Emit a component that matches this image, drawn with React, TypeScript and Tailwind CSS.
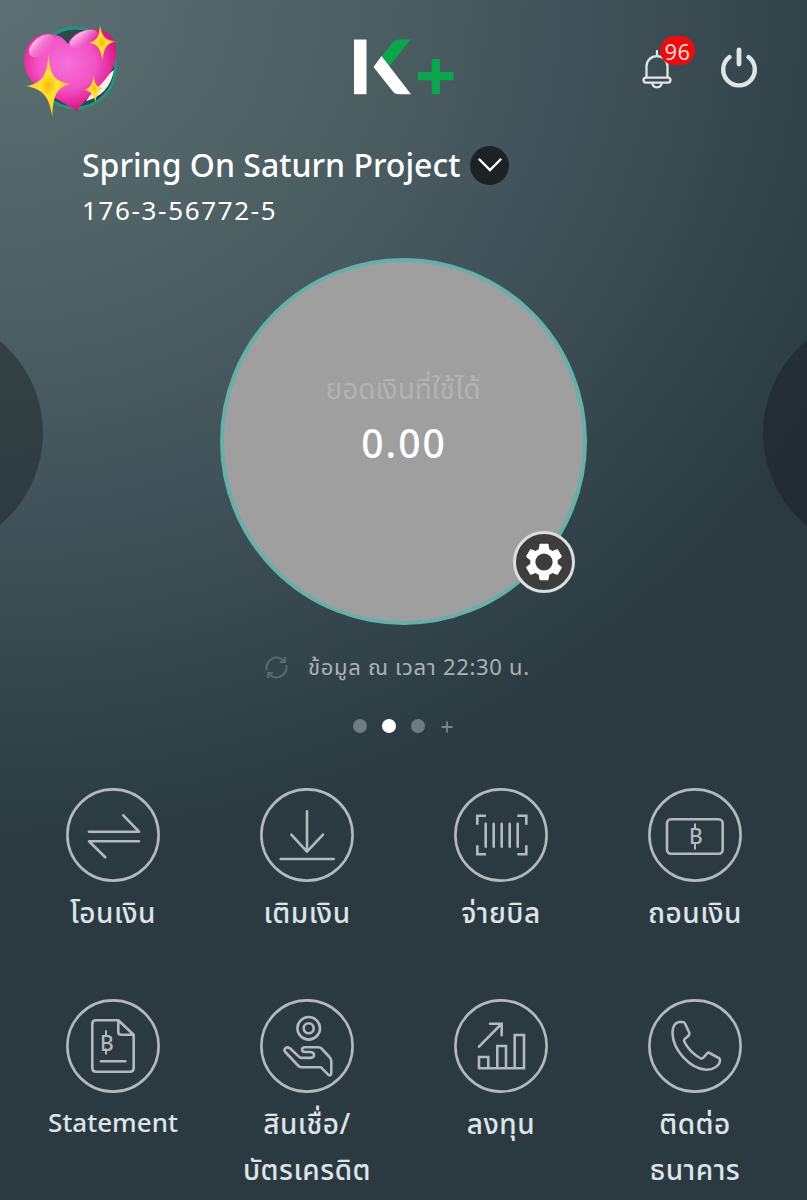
import { type ReactNode } from 'react';

type MenuItem = {
  label: string[];
  icon: ReactNode;
};

const HeartAvatar = () => (
  <svg width={100} height={96} viewBox="20 22 100 96">
    <defs>
      <radialGradient id="heart" cx="0.46" cy="0.42" r="0.62">
        <stop offset="0" stopColor="#f76fdd" />
        <stop offset="0.5" stopColor="#f254c4" />
        <stop offset="0.8" stopColor="#e32596" />
        <stop offset="1" stopColor="#cf0f68" />
      </radialGradient>
      <linearGradient id="shine" x1="0" y1="0" x2="0.3" y2="1">
        <stop offset="0" stopColor="#ffeafa" stopOpacity="0.95" />
        <stop offset="1" stopColor="#fb8be0" stopOpacity="0" />
      </linearGradient>
      <radialGradient id="spark">
        <stop offset="0" stopColor="#ffb800" />
        <stop offset="0.4" stopColor="#ffe23c" />
        <stop offset="1" stopColor="#ffc21a" />
      </radialGradient>
    </defs>
    <circle cx="75.500" cy="68" r="40" fill="#30484b" stroke="#22957f" strokeWidth="3" />
    <path d="M114 70C111 87 101 97 86 101L92 92L110 73Z" fill="#f3efed" />
    <path
      d="M68 44C61 33 46 31 36 37C25 44 22 57 25.500 70C31 88 57 98 77 111C84 99 104 84 112 70C118 57 118 41 109 34C96 25 74 29 68 44Z"
      fill="url(#heart)"
    />
    <ellipse cx="42" cy="46" rx="15" ry="9" fill="url(#shine)" transform="rotate(-38 42 46)" />
    <ellipse cx="84" cy="39" rx="15" ry="7.500" fill="url(#shine)" transform="rotate(-25 84 39)" />
    <g fill="url(#spark)">
      <path d="M48.500 54C50 74 53 81 70 84C55 88 53 98 52.500 117C49 99 46 90 26 86C43 83 47 75 48.500 54Z" />
      <path d="M100 25C102 36 104 40 115 41.500C106 44 104 48 102.500 60C100 48 98 44 89 43C98 40 99 36 100 25Z" />
      <path d="M93.500 75C94.500 84 96 87 103 88C98 91 96.500 95 95.500 102C93.500 95 92 92 85 90C91 87 93 83 93.500 75Z" />
    </g>
  </svg>
);

const Logo = () => (
  <svg width={102} height={56} viewBox="353 39.500 102 56">
    <path d="M354 40H366.500V94.700H354Z" fill="#fff" />
    <path d="M382 57L392 43.500Q395 40 400 40H410.500L389 67Z" fill="#0ba64c" />
    <path d="M381.500 56.500L411 94.700H399Q395 94.700 392.500 91.500L373.500 67.500Z" fill="#fff" />
    <path d="M418 76.600H453.500M435.800 59.500V94.500" stroke="#0ba64c" strokeWidth="8.200" />
  </svg>
);

const BellIcon = () => (
  <svg width={30} height={40} viewBox="642 50 30 40" fill="none" stroke="#dfe6ea" strokeWidth="2.300">
    <path d="M657 51V56M646.500 77V66.500C646.500 60.500 651 56.200 657 56.200S667.500 60.500 667.500 66.500V77" strokeLinecap="round" />
    <rect x="643.500" y="77.600" width="27" height="5" rx="2.500" />
    <path d="M652.500 83C652.500 86 654 87.300 657 87.300S661.500 86 661.500 83" />
  </svg>
);

const PowerIcon = () => (
  <svg width={38} height={42} viewBox="720 46 38 42" fill="none" stroke="#dfe6ea" strokeLinecap="round">
    <path d="M729.500 57A15.800 15.800 0 1 0 748.500 57" strokeWidth="4.400" />
    <path d="M739 50V64" strokeWidth="4.800" />
  </svg>
);

const Baht = ({ x, y, top, bottom }: { x: number; y: number; top: number; bottom: number }) => (
  <>
    <text
      x={x}
      y={y}
      fill="#b2babd"
      stroke="none"
      className="font-['Noto_Sans',sans-serif] text-[21px] font-medium"
    >
      B
    </text>
    <path d={`M${x + 6} ${top}V${top + 4.500}M${x + 6} ${bottom - 4.500}V${bottom}`} strokeWidth="2" />
  </>
);

const items: MenuItem[] = [
  {
    label: ['โอนเงิน'],
    icon: <path d="M57.300 27.300L73 43.700H23M39.300 69.300L23 53.300H73" />,
  },
  {
    label: ['เติมเงิน'],
    icon: <path d="M47 23.300V63.500M31.300 46.700L47 63.700L63 46.700M20.700 71H73.700" />,
  },
  {
    label: ['จ่ายบิล'],
    icon: (
      <>
        <path d="M32 27.700H23.300V36.700M63.300 27.700H72.300V36.700M32 66.300H23.300V57.300M63.300 66.300H72.300V57.300" strokeLinecap="butt" strokeLinejoin="miter" />
        <path d="M31.700 35.700V58.700M39.700 35.700V58.700M47.700 35.700V58.700M55.700 35.700V58.700M63.700 35.700V58.700" />
      </>
    ),
  },
  {
    label: ['ถอนเงิน'],
    icon: (
      <>
        <rect x="19" y="31.300" width="55.700" height="34.400" rx="4" />
        <Baht x={41} y={56} top={36.300} bottom={60.700} />
      </>
    ),
  },
  {
    label: ['Statement'],
    icon: (
      <>
        <path d="M52.300 21.300H30Q26.300 21.300 26.300 25V69Q26.300 72.700 30 72.700H64Q67.700 72.700 67.700 69V35.700ZV33Q52.300 35.700 55 35.700H67.700" />
        <path d="M35 62.300H59.300" />
        <Baht x={34} y={51.500} top={32} bottom={54.800} />
      </>
    ),
  },
  {
    label: ['สินเชื่อ/', 'บัตรเครดิต'],
    icon: (
      <>
        <circle cx="48.700" cy="29.300" r="11.300" />
        <circle cx="48.700" cy="29.300" r="5" />
        <path d="M25.300 53L38.500 67Q39.800 68.300 42 68.300H61L68.500 75.800Q71 77.500 71.300 74V62.500Q71.300 60 69.500 58L61.500 49.500Q60.500 48.300 58.500 48.300H45Q42 48.300 42 50.500T45 53H50.500Q54 53.300 54 56T50.500 58.900H41.500Q40 58.900 38.500 57.400L30 49.300C26.500 47 23 50 25.300 53Z" />
      </>
    ),
  },
  {
    label: ['ลงทุน'],
    icon: (
      <>
        <path d="M25 47.700L47.300 25M36 24.700H47.700V36.300" strokeLinejoin="miter" />
        <path d="M25 69.300V58H34.300V69.300M43.300 69.300V47H52V69.300M60.700 69.300V36H70V69.300H25Z" strokeLinejoin="miter" />
      </>
    ),
  },
  {
    label: ['ติดต่อ', 'ธนาคาร'],
    icon: (
      <path d="M34.800 23H31C26.500 23.800 24.500 28 24.500 34C24.800 51 42 69.500 58 70.700C65 71 71.500 67 72 61.500Q72 59.500 70.500 58.800L61.500 54Q60 53.200 59 54.500L55.500 58.500Q54 60.200 52 59C45 55 39.500 49 36.500 43Q35.500 41 37 39.800L40.800 36.500Q42 35.300 41.300 33.800L37 24.500Q36.200 23 34.800 23Z" />
    ),
  },
];

const MenuButton = ({ item }: { item: MenuItem }) => (
  <button className="flex h-[211px] flex-col items-center">
    <svg
      width={94}
      height={94}
      viewBox="0 0 94 94"
      fill="none"
      stroke="#b2babd"
      strokeWidth="2.600"
      strokeLinecap="round"
      strokeLinejoin="round"
    >
      <circle cx="47" cy="47" r="45.600" />
      {item.icon}
    </svg>
    <span className="mt-[7px] flex flex-col leading-[46px] font-medium whitespace-nowrap text-[#dce4e8]">
      {item.label.map((line) => (
        <span
          key={line}
          className={line === 'Statement' ? 'text-[26px] leading-[45px]' : 'text-[28px] tracking-[0.5px] leading-[46px]'}
        >
          {line}
        </span>
      ))}
    </span>
  </button>
);

export default function App() {
  return (
    <div className="flex h-[1200px] w-[807px] flex-col overflow-hidden bg-[#2b3a41] bg-[radial-gradient(ellipse_950px_850px_at_0%_0%,#5c7073_0%,#4d6063_35%,#41535a_60%,#38494f_75%,#32434a_85%,#2b3a41_100%)] font-['Noto_Sans','Noto_Sans_Thai',sans-serif] text-white">
      <header className="flex h-[130px] shrink-0 items-start justify-between pt-[22px] pr-[49px] pl-5">
        <div className="flex">
          <HeartAvatar />
          <div className="mt-[17px] ml-[233px]">
            <Logo />
          </div>
        </div>
        <div className="flex">
          <div className="relative mt-[28px] mr-[48px]">
            <BellIcon />
            <span className="absolute -top-[14px] left-[18px] flex h-[29px] w-[35px] items-center justify-center rounded-full bg-[#ec0b0d] text-[22px] leading-none tracking-[0.5px] text-[#ffd9d3]">
              96
            </span>
          </div>
          <div className="mt-6">
            <PowerIcon />
          </div>
        </div>
      </header>

      <section className="h-[128px] shrink-0 pl-[82px]">
        <div className="flex items-center pt-[15px]">
          <h1 className="w-[388px] text-[32px] leading-[40px] font-medium whitespace-nowrap">Spring On Saturn Project</h1>
          <button className="flex size-[39px] items-center justify-center rounded-full bg-[#1b2325]">
            <svg width={24} height={14} viewBox="0 0 24 14" fill="none" stroke="#fff" strokeWidth="2.400" strokeLinecap="round">
              <path d="M1.500 1.500L12 12L22.500 1.500" />
            </svg>
          </button>
        </div>
        <p className="mt-[8px] text-[26px] leading-[34px] tracking-[1.65px]">176-3-56772-5</p>
      </section>

      {/* Account carousel */}
      <section className="flex h-[367px] shrink-0 items-center justify-between">
        <div className="mb-[17px] -ml-[197px] size-[240px] shrink-0 rounded-full bg-[#12181b]/40" />
        <div className="relative flex size-[367px] shrink-0 flex-col items-center rounded-full border-[4px] border-[#66b0a9] bg-[#9f9f9f]">
          <p className="mt-[106px] text-[28px] leading-[40px] text-[#b3b3b3]">ยอดเงินที่ใช้ได้</p>
          <p className="mt-[10px] pl-[2px] text-[39px] leading-[50px] font-medium tracking-[2px]">0.00</p>
          <button className="absolute top-[269px] left-[289px] flex size-[62px] items-center justify-center rounded-full border-[3px] border-[#dcdee0] bg-[#3e3d3d]">
            <svg width={44} height={44} viewBox="0 0 24 24" fill="#fff" className="shrink-0">
              <path d="M19.430 12.980c.04-.32.07-.64.07-.98s-.03-.66-.07-.98l2.110-1.650c.19-.15.24-.42.12-.64l-2-3.460c-.12-.22-.39-.3-.61-.22l-2.490 1c-.52-.4-1.080-.73-1.690-.98l-.38-2.650C14.460 2.180 14.250 2 14 2h-4c-.25 0-.46.18-.49.42l-.38 2.650c-.61.25-1.170.59-1.690.98l-2.490-1c-.23-.09-.49 0-.61.22l-2 3.460c-.13.22-.07.49.12.64l2.110 1.650c-.04.32-.07.65-.07.98s.03.66.07.98l-2.110 1.650c-.19.15-.24.42-.12.64l2 3.460c.12.22.39.3.61.22l2.490-1c.52.4 1.080.73 1.690.98l.38 2.650c.03.24.24.42.49.42h4c.25 0 .46-.18.49-.42l.38-2.650c.61-.25 1.170-.59 1.690-.98l2.490 1c.23.09.49 0 .61-.22l2-3.460c.12-.22.07-.49-.12-.64l-2.110-1.650zM12 16.700a4.700 4.700 0 1 1 0-9.400 4.700 4.700 0 0 1 0 9.400z" />
            </svg>
          </button>
        </div>
        <div className="mb-[17px] -mr-[196px] size-[240px] shrink-0 rounded-full bg-[#12181b]/40" />
      </section>

      <div className="mt-[24px] flex h-[36px] shrink-0 items-center pl-[265px] text-[#a9b2b6]">
        <svg width={23} height={23} viewBox="0 0 23 23" fill="none" stroke="#5c6a70" strokeWidth="2">
          <path d="M1.800 14A10 10 0 0 1 19 5M21.200 9A10 10 0 0 1 4 18M20 1V6H15M3 22V17H8" />
        </svg>
        <span className="ml-5 -mt-[2px] text-[22px] leading-[36px] tracking-[0.7px] whitespace-nowrap">ข้อมูล ณ เวลา 22:30 น.</span>
      </div>

      <div className="mt-[31px] flex h-[20px] shrink-0 items-center gap-[15px] pl-[353px]">
        <span className="size-[14px] rounded-full bg-[#6e7b81]" />
        <span className="size-[14px] rounded-full bg-white" />
        <span className="size-[14px] rounded-full bg-[#6e7b81]" />
        <svg width={12} height={12} viewBox="0 0 12 12" stroke="#7c888d" strokeWidth="1.800" className="mt-[2px] ml-[1px]">
          <path d="M6 0.500V11.500M0.500 6H11.500" />
        </svg>
      </div>

      <nav className="mt-[52px] grid shrink-0 grid-cols-4 pr-[15px] pl-4">
        {items.map((item) => (
          <MenuButton key={item.label[0]} item={item} />
        ))}
      </nav>
    </div>
  );
}
